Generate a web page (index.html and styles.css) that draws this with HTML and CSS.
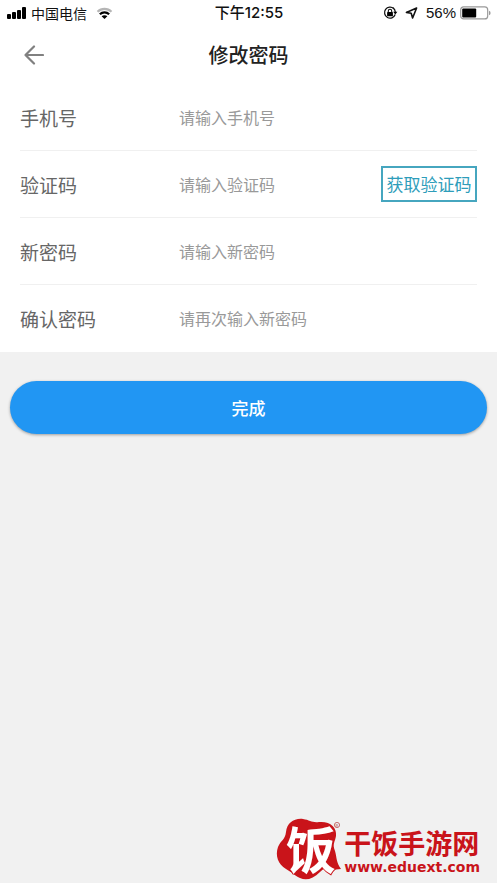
FILE: index.html
```html
<!DOCTYPE html>
<html lang="zh-CN">
<head>
<meta charset="utf-8">
<meta name="viewport" content="width=device-width, initial-scale=1">
<title>修改密码</title>
<link rel="stylesheet" href="styles.css">
</head>
<body>
<div class="status">
  <div class="status-side">
    <svg width="20" height="13" viewBox="0 0 20 13" aria-hidden="true"><rect x="0" y="7" width="4" height="5" rx="1"/><rect x="5" y="5" width="4" height="7" rx="1"/><rect x="10" y="3" width="4" height="9" rx="1"/><rect x="15" y="0" width="4" height="12" rx="1"/></svg>
    <span class="carrier">中国电信</span>
    <svg class="wifi" width="17" height="13" viewBox="0 0 18 14" fill="none" stroke="#000" stroke-width="2.4" aria-hidden="true"><path d="M1.5 5.2C5.6 1 12.4 1 16.5 5.2" stroke="#b5b5b5"/><path d="M4 7.8C6.8 5 11.2 5 14 7.8"/><path d="M9 13L5.9 10C7.6 8.5 10.4 8.5 12.1 10Z" fill="#000" stroke="none"/></svg>
  </div>
  <span class="time">下午12:55</span>
  <div class="status-side status-right">
    <svg width="15" height="14" viewBox="0 0 15 14" aria-hidden="true"><path d="M10.8 2.6A5.5 5.5 0 1 0 12.2 8.6" fill="none" stroke="#111" stroke-width="1.3"/><path d="M10 1.9A5.5 5.5 0 0 1 12.3 6" fill="none" stroke="#111" stroke-width="1.3"/><path d="M10.2 5.7H14.4L12.3 8.6Z"/><rect x="4.1" y="6" width="5.8" height="4.3" rx=".6"/><path d="M5.3 6V4.9a1.7 1.7 0 0 1 3.4 0V6" fill="none" stroke="#111" stroke-width="1.1"/></svg>
    <svg class="locate" width="13" height="12" viewBox="0 0 13 12" aria-hidden="true"><path d="M11.6 1L1.4 5.4L6.2 6.3L7.6 11Z" fill="none" stroke="#111" stroke-width="1.6" stroke-linejoin="round"/></svg>
    <span class="percent">56%</span>
    <svg width="31" height="14" viewBox="0 0 31 14" aria-hidden="true"><rect x=".7" y=".9" width="27" height="12" rx="3" fill="#fff" stroke="#999" stroke-width="1.2"/><rect x="2.2" y="2.4" width="14" height="9" rx="1"/><path d="M29 4.8q1.6.4 1.6 2.2T29 9.2Z" fill="#999"/></svg>
  </div>
</div>
<header class="header">
  <button class="back" type="button" aria-label="返回"><svg width="20" height="20" viewBox="0 0 20 20" fill="none" stroke="#808080" stroke-width="2.2" stroke-linecap="round" stroke-linejoin="round"><path d="M10 1.5L1.5 10L10 18.5M1.5 10H19"/></svg></button>
  <h1>修改密码</h1>
</header>
<form class="form">
  <div class="fields">
    <div class="row"><label for="phone">手机号</label><input id="phone" type="tel" placeholder="请输入手机号"></div>
    <div class="row"><label for="code">验证码</label><input id="code" type="text" placeholder="请输入验证码"><button class="get-code" type="button">获取验证码</button></div>
    <div class="row"><label for="password">新密码</label><input id="password" type="password" placeholder="请输入新密码"></div>
    <div class="row"><label for="confirm">确认密码</label><input id="confirm" type="password" placeholder="请再次输入新密码"></div>
  </div>
  <button class="submit" type="submit">完成</button>
</form>
<footer class="brand">
  <svg class="mark" width="66" height="64" viewBox="0 0 66 64" role="img" aria-label="饭">
    <path d="M10 14C11 5 18 0 27 1C34 2 36 5 43 4C54 3 61 9 60 18C59 24 56 26 59 33C61 40 60 44 65 51L55 52C50 49 48 50 44 54C37 61 30 63 24 60C18 57 17 55 10 51C2 46-1 38 2 29C5 22 9 22 10 14Z" fill="#c9141a"/>
    <text class="mark-char" x="10" y="51">饭</text>
    <circle cx="61" cy="7" r="2.6" fill="none" stroke="#b33b3b" stroke-width=".7"/>
    <text class="registered" x="59.5" y="8.5">R</text>
  </svg>
  <div class="brand-text"><strong>干饭手游网</strong><span>www.eduext.com</span></div>
</footer>
</body>
</html>
```
FILE: styles.css
```css
* { box-sizing: border-box; }
body {
  margin: 0;
  min-height: 100vh;
  display: flex;
  flex-direction: column;
  background: #f1f1f1;
  font-family: "Noto Sans CJK SC", sans-serif;
  color: #222;
}
button, input { font: inherit; margin: 0; padding: 0; border: 0; background: none; }
.status {
  display: grid;
  grid-template-columns: 1fr auto 1fr;
  align-items: center;
  height: 26px;
  padding: 0 6px 0 7px;
  background: #fff;
  color: #111;
  font-size: 14px;
  line-height: 24px;
}
.status-side { display: flex; align-items: center; }
.status-right { justify-content: flex-end; }
.carrier { margin-left: 4px; }
.wifi { margin-left: 9px; }
.time { font-family: Inter, "Noto Sans CJK SC", sans-serif; font-size: 15px; font-weight: 500; }
.locate { margin: 0 8px 0 7px; }
.percent { margin-right: 4px; font-family: "Liberation Sans", sans-serif; font-size: 15px; }
.header {
  display: grid;
  grid-template-columns: 44px 1fr 44px;
  align-items: center;
  height: 58px;
  background: #fff;
}
.back { display: flex; justify-content: flex-end; }
h1 {
  margin: 0;
  text-align: center;
  font-size: 20px;
  line-height: 30px;
  font-weight: 500;
}
.form { flex: 1; }
.fields { padding: 0 20px; background: #fff; }
.row {
  display: flex;
  align-items: center;
  height: 67px;
  border-bottom: 1px solid #f0f0f0;
}
.row:last-child { border-bottom-color: #fff; }
.row label { flex: 0 0 159px; font-size: 19px; color: #666; }
.row input { flex: 1; min-width: 0; height: 40px; font-size: 16px; color: #333; outline: none; }
.row input::placeholder { color: #999; opacity: 1; }
.get-code {
  flex: none;
  width: 96px;
  height: 36px;
  border: 2px solid #46a6bf;
  color: #2e9dba;
  font-size: 17px;
  line-height: 24px;
  white-space: nowrap;
}
.submit {
  display: block;
  width: calc(100% - 20px);
  height: 53px;
  margin: 29px 10px 0;
  border-radius: 27px;
  background: #2196f3;
  box-shadow: 0 1px 3px rgba(0, 0, 0, .35);
  color: #fff;
  font-size: 17px;
  font-weight: 500;
}
.brand {
  display: flex;
  justify-content: flex-end;
  align-items: flex-end;
  gap: 2px;
  padding: 0 17px 1px 0;
  color: #c9141a;
}
.mark { overflow: visible; }
.mark-char {
  font-size: 50px;
  font-weight: 700;
  fill: #fff;
  stroke: #c9141a;
  stroke-width: 2px;
  paint-order: stroke;
}
.registered { font-size: 4px; fill: #b33b3b; }
.brand-text { display: flex; flex-direction: column; padding-bottom: 7px; }
.brand-text strong {
  font-size: 27px;
  line-height: 33px;
  font-weight: 700;
}
.brand-text span {
  font-family: "DejaVu Sans", sans-serif;
  font-size: 14px;
  line-height: 16px;
  font-weight: 700;
}
```
